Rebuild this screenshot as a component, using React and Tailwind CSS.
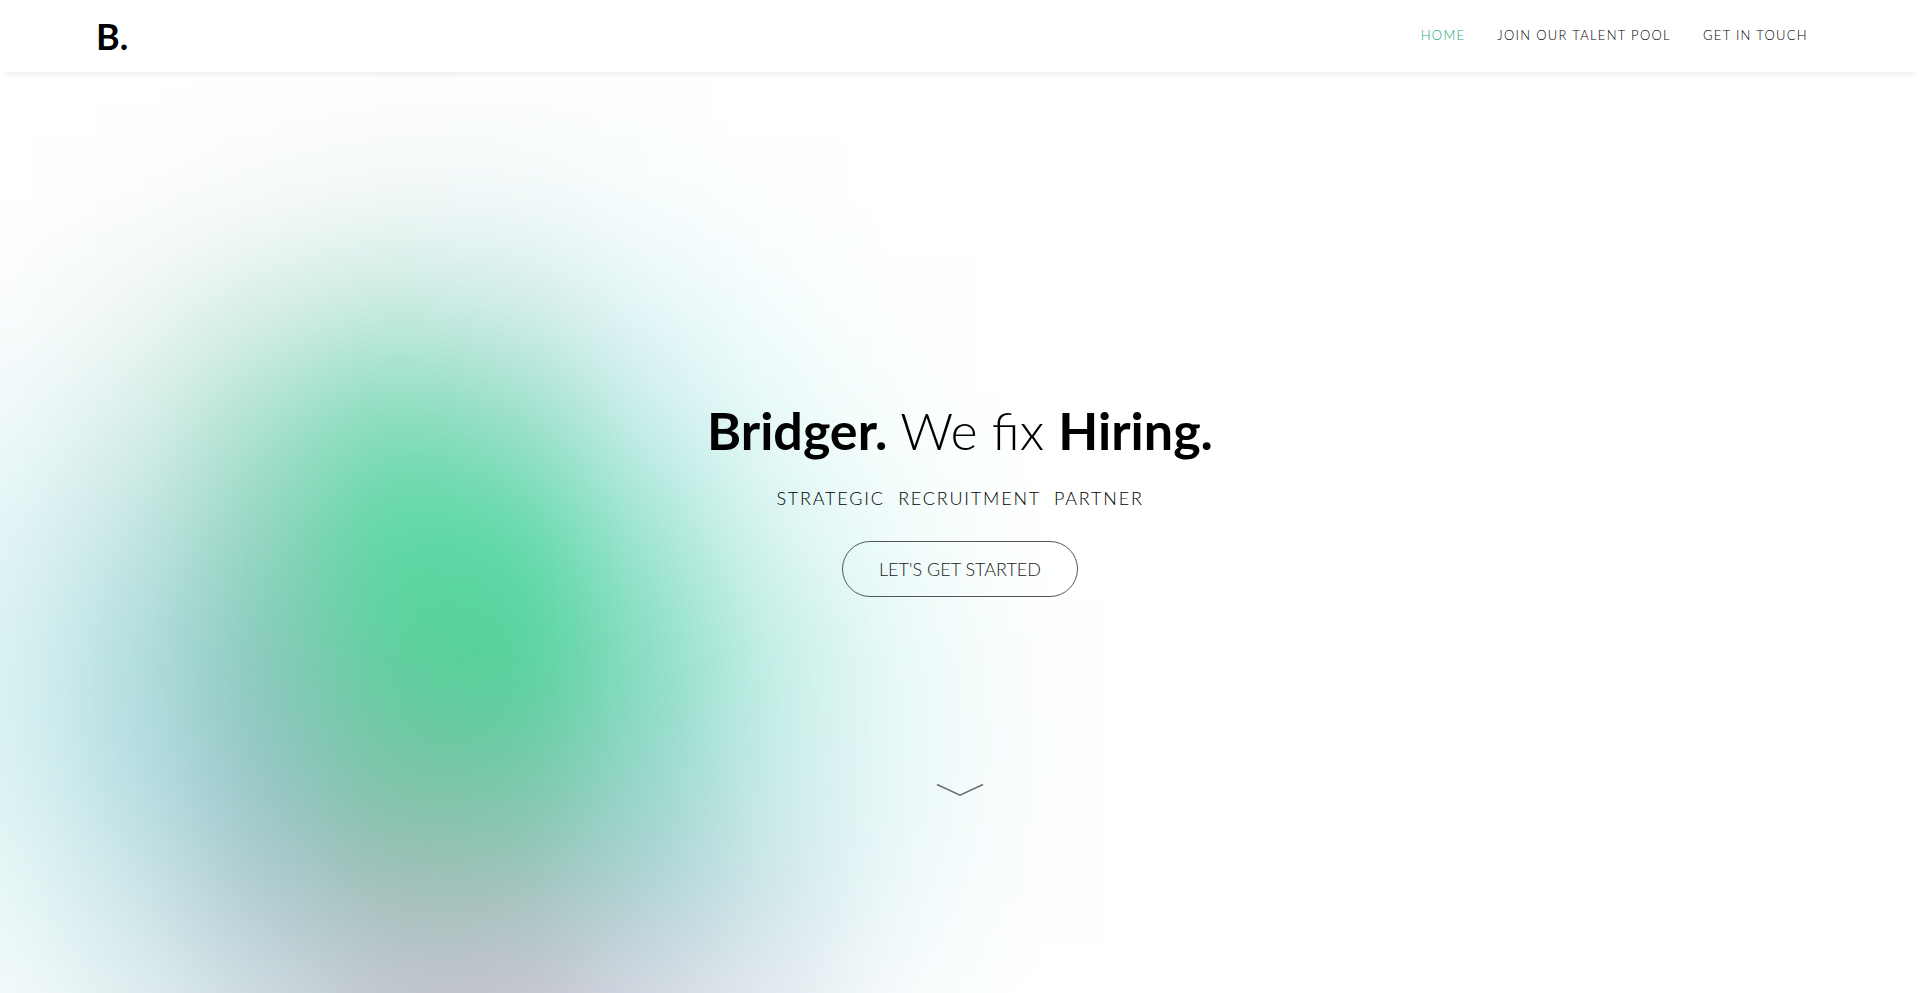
import React from 'react'

const links = [
    { label: 'HOME', href: '#home', active: true },
    { label: 'JOIN OUR TALENT POOL', href: '#talent-pool' },
    { label: 'GET IN TOUCH', href: '#contact' },
]

// colour mesh of the backdrop, one row of tints per band, blurred together
const CELL_W = 130
const CELL_H = 115
const mesh = [
    ['#ffffff', '#ffffff', '#fefefe', '#fefefe', '#fefefe', '#fefefe', '#ffffff', '#ffffff', '#ffffff'],
    ['#ffffff', '#fdfdfd', '#f9fbfb', '#f4f8f9', '#f3f9fa', '#f9fefe', '#fdfefe', '#ffffff', '#ffffff'],
    ['#fcfdfe', '#f0f7f6', '#d8eee9', '#c5e9df', '#d0ebe8', '#e6f6f9', '#f6fefe', '#fefefe', '#ffffff'],
    ['#f0fafc', '#dbefeb', '#aae1cf', '#7fdbb7', '#96dec7', '#cbeeec', '#e9faf9', '#fafffe', '#ffffff'],
    ['#e5f5f7', '#c4e5e4', '#92d3c0', '#58d8a0', '#5ed9a8', '#a2e5d5', '#dcf5f3', '#f2fdfc', '#ffffff'],
    ['#dcf3f4', '#b4dfe1', '#88c8bb', '#5dd09c', '#50d297', '#88dec4', '#c6efe8', '#ebfaf9', '#fefefe'],
    ['#def4f4', '#b8dfe4', '#96c5c6', '#77c4a4', '#72c8a6', '#96d8cc', '#cbedea', '#ebf9fa', '#fdfefe'],
    ['#eaf8f7', '#cde7ea', '#aecad0', '#a2beb8', '#a2c2bc', '#aed3d5', '#d1e8eb', '#f0fafb', '#fefefe'],
    ['#f4fbfd', '#e2eff1', '#cfdce2', '#c5c7d1', '#c9c4d1', '#d8dae4', '#e6ebf1', '#f9fdfe', '#ffffff'],
    ['#ffffff', '#f0f5f7', '#dce0e7', '#cfc9d5', '#cfc5d4', '#dddbe6', '#f0f2f7', '#fdfefe', '#ffffff'],
]

const Backdrop = () => (
    <svg className='absolute inset-0 h-full w-full' viewBox='0 0 1920 993' preserveAspectRatio='none' aria-hidden='true'>
        <filter id='melt' filterUnits='userSpaceOnUse' x='-300' y='-300' width='2400' height='1700' colorInterpolationFilters='sRGB'>
            <feGaussianBlur stdDeviation='54' />
        </filter>
        <g filter='url(#melt)'>
            <rect x='-300' y='-300' width='2400' height='1700' fill='#fff' />
            {mesh.map((row, r) => row.map((color, c) => (
                <rect
                    key={`${r}-${c}`}
                    x={c === 0 ? -300 : (c - 0.5) * CELL_W}
                    y={80 + (r - 0.5) * CELL_H}
                    width={c === 0 ? 300 + CELL_W / 2 : CELL_W + 1}
                    height={r === mesh.length - 1 ? 300 : CELL_H + 1}
                    fill={color}
                />
            )))}
        </g>
    </svg>
)

const Navbar = () => (
    <header className='relative z-10 flex h-[72px] items-center justify-between bg-white px-[5%] shadow-[0_6px_6px_-4px_rgba(0,0,0,0.08)]'>
        <a href='#home' className='text-4xl font-bold text-black'>B.</a>
        <nav className='flex items-center gap-8 pr-4'>
            {links.map(({ label, href, active }) => (
                <a key={label} href={href} className={active ? 'text-[13px] font-light tracking-widest text-[#10a874]' : 'text-[13px] font-light tracking-widest text-black'}>
                    {label}
                </a>
            ))}
        </nav>
    </header>
)

const Hero = () => (
    <main className='relative flex flex-1 flex-col items-center pt-[322px] text-center'>
        <h1 className='text-[52px] leading-[72px] font-light text-black'>
            <strong className='font-bold'>Bridger.</strong> We fix <strong className='font-bold'>Hiring.</strong>
        </h1>
        <p className='mt-[18px] text-lg leading-[28px] font-light tracking-widest whitespace-pre text-black'>STRATEGIC  RECRUITMENT  PARTNER</p>
        <button type='button' className='mt-[29px] h-14 rounded-full border border-[#555] px-9 text-lg font-light text-[#222]'>
            LET'S GET STARTED
        </button>
        <a href='#about' aria-label='Scroll down' className='mt-[184px]'>
            <svg className='h-[18px] w-12' viewBox='0 0 48 18' fill='none' stroke='#6b6f70' strokeWidth='1.6'>
                <path d='M1 3.5 24 14.2 47 3.5' />
            </svg>
        </a>
    </main>
)

const App = () => {
    return (
        <div className="relative flex min-h-screen flex-col overflow-hidden bg-white font-['Lato','Open_Sans',sans-serif]">
            <Backdrop />
            <Navbar />
            <Hero />
        </div>
    )
}

export default App
